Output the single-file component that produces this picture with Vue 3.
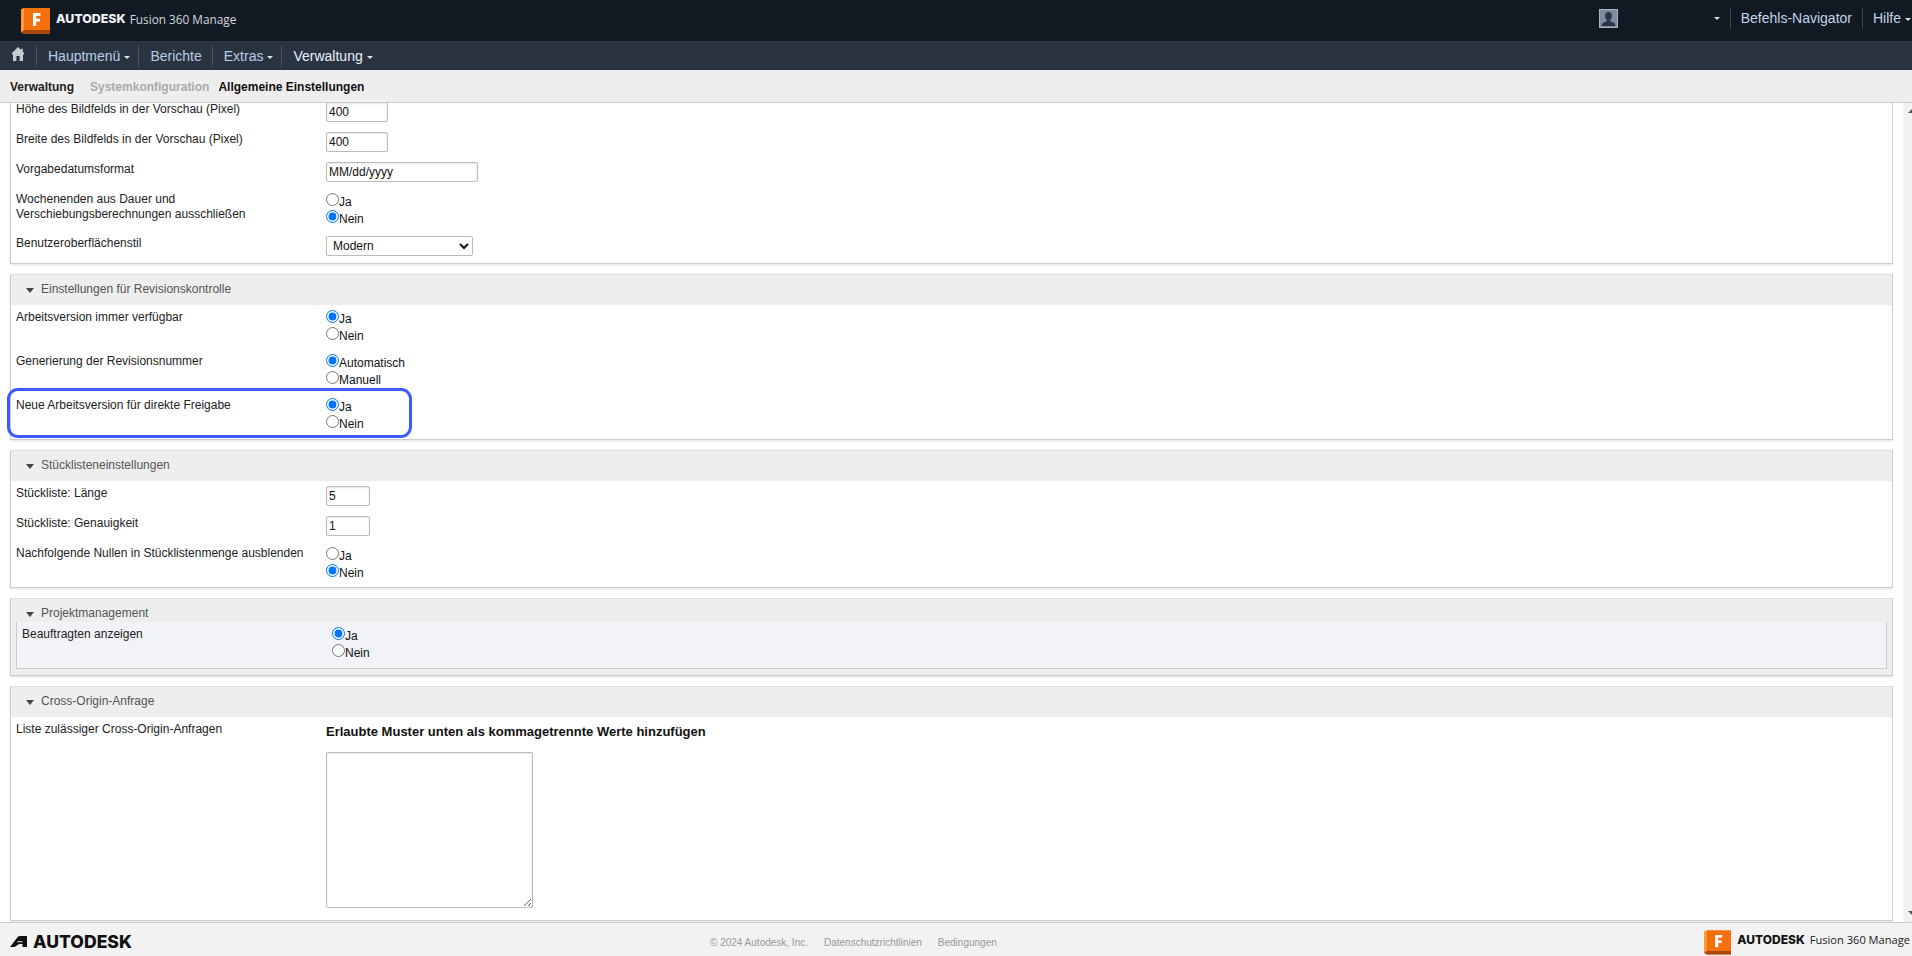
<script setup>
const navItems = [
  { label: 'Hauptmenü', caret: true },
  { label: 'Berichte' },
  { label: 'Extras', caret: true },
  { label: 'Verwaltung', caret: true, active: true },
];
</script>

<template>
  <div class="page">
    <header class="topbar">
      <div class="brand">
        <svg class="f-icon" viewBox="0 0 29 26" width="29" height="26">
          <polygon points="0,1.5 3,0 29,0 29,26 3,26 0,24" fill="#f7942f" />
          <rect x="3" y="0" width="26" height="22" fill="#f56f0c" />
          <polygon points="0,24 3,22 29,22 29,26 3,26" fill="#a8470c" />
          <polygon points="0,1.5 3,0 3,22 0,24" fill="#ff9c38" />
          <path d="M12 5h7.5v2.8h-4.2v3h3.7v2.7h-3.7V18H12z" fill="#fff" />
        </svg>
        <span class="brand-name">AUTODESK</span>
        <span class="brand-product">Fusion 360 Manage</span>
      </div>
      <div class="top-right">
        <svg class="avatar" viewBox="0 0 19 19" width="19" height="19">
          <rect width="19" height="19" fill="#7b8ba0" />
          <rect x="0.5" y="0.5" width="18" height="18" fill="none" stroke="#aab4c0" />
          <path d="M9.5 3c2.2 0 3.4 1.7 3.4 3.9 0 1.6-.7 3-1.6 3.8v1.6l3.7 1.7c.8.4 1.2.9 1.2 2V17H2.800v-1c0-1.100.4-1.600 1.200-2l3.700-1.700v-1.600c-.9-.8-1.600-2.200-1.600-3.800C6.100 4.700 7.300 3 9.500 3z" fill="#2b3644" />
        </svg>
        <i class="caret user-caret"></i>
        <span class="top-sep"></span>
        <a class="top-link">Befehls-Navigator</a>
        <span class="top-sep"></span>
        <a class="top-link">Hilfe<i class="caret"></i></a>
      </div>
    </header>

    <nav class="navbar">
      <svg class="home" viewBox="0 0 12 14" width="12" height="14">
        <path d="M6 0 9 3V1.800h1.800V4.800L12 6v1.500H11V14H7.600V9H4.400V14H1V7.500H0V6z" fill="#c6cbd0" />
      </svg>
      <template v-for="item in navItems" :key="item.label">
        <span class="nav-sep"></span>
        <a class="nav-item" :class="{ active: item.active, 'has-caret': item.caret }">
          {{ item.label }}<i v-if="item.caret" class="caret"></i>
        </a>
      </template>
    </nav>

    <div class="crumbs">
      <span>Verwaltung</span>
      <span class="muted">Systemkonfiguration</span>
      <span>Allgemeine Einstellungen</span>
    </div>

    <div class="body">
      <main class="content">
        <section class="panel first">
          <div class="row input-row">
            <label>Höhe des Bildfelds in der Vorschau (Pixel)</label>
            <div><input class="txt w62" value="400" /></div>
          </div>
          <div class="row input-row">
            <label>Breite des Bildfelds in der Vorschau (Pixel)</label>
            <div><input class="txt w62" value="400" /></div>
          </div>
          <div class="row input-row">
            <label>Vorgabedatumsformat</label>
            <div><input class="txt w152" value="MM/dd/yyyy" /></div>
          </div>
          <div class="row radio-row compact">
            <label>Wochenenden aus Dauer und<br />Verschiebungsberechnungen ausschließen</label>
            <div>
              <div class="radio"><input type="radio" name="weekend" /><span>Ja</span></div>
              <div class="radio"><input type="radio" name="weekend" checked /><span>Nein</span></div>
            </div>
          </div>
          <div class="row input-row tight">
            <label>Benutzeroberflächenstil</label>
            <div><select class="sel"><option>Modern</option></select></div>
          </div>
        </section>

        <section class="panel revision">
          <h3 class="panel-head"><i class="tri"></i>Einstellungen für Revisionskontrolle</h3>
          <div class="row radio-row">
            <label>Arbeitsversion immer verfügbar</label>
            <div>
              <div class="radio"><input type="radio" name="wv" checked /><span>Ja</span></div>
              <div class="radio"><input type="radio" name="wv" /><span>Nein</span></div>
            </div>
          </div>
          <div class="row radio-row">
            <label>Generierung der Revisionsnummer</label>
            <div>
              <div class="radio"><input type="radio" name="gen" checked /><span>Automatisch</span></div>
              <div class="radio"><input type="radio" name="gen" /><span>Manuell</span></div>
            </div>
          </div>
          <div class="row radio-row">
            <label>Neue Arbeitsversion für direkte Freigabe</label>
            <div>
              <div class="radio"><input type="radio" name="neu" checked /><span>Ja</span></div>
              <div class="radio"><input type="radio" name="neu" /><span>Nein</span></div>
            </div>
            <span class="highlight"></span>
          </div>
        </section>

        <section class="panel bom">
          <h3 class="panel-head"><i class="tri"></i>Stücklisteneinstellungen</h3>
          <div class="bom-rows">
            <div class="row input-row">
              <label>Stückliste: Länge</label>
              <div><input class="txt w44" value="5" /></div>
            </div>
            <div class="row input-row">
              <label>Stückliste: Genauigkeit</label>
              <div><input class="txt w44" value="1" /></div>
            </div>
            <div class="row radio-row compact">
              <label>Nachfolgende Nullen in Stücklistenmenge ausblenden</label>
              <div>
                <div class="radio"><input type="radio" name="null" /><span>Ja</span></div>
                <div class="radio"><input type="radio" name="null" checked /><span>Nein</span></div>
              </div>
            </div>
          </div>
        </section>

        <section class="panel project">
          <h3 class="panel-head small"><i class="tri"></i>Projektmanagement</h3>
          <div class="inner">
            <div class="row radio-row">
              <label>Beauftragten anzeigen</label>
              <div>
                <div class="radio"><input type="radio" name="bea" checked /><span>Ja</span></div>
                <div class="radio"><input type="radio" name="bea" /><span>Nein</span></div>
              </div>
            </div>
          </div>
        </section>

        <section class="panel last">
          <h3 class="panel-head"><i class="tri"></i>Cross-Origin-Anfrage</h3>
          <div class="row cors">
            <label>Liste zulässiger Cross-Origin-Anfragen</label>
            <div>
              <p class="hint">Erlaubte Muster unten als kommagetrennte Werte hinzufügen</p>
              <textarea class="area"></textarea>
            </div>
          </div>
        </section>
      </main>

      <aside class="scrollbar">
        <i class="arrow up"></i>
        <i class="arrow down"></i>
      </aside>
    </div>

    <footer class="footer">
      <div class="adsk">
        <svg viewBox="0 0 17 11" width="17" height="11">
          <path d="M0 11 7.500 1.200Q8.500 0 10 0H17V11H12.500V8H9.200L4.500 11z" fill="#111" />
          <path d="M7.800 5.200H12.500V6.200H7z" fill="#f2f2f2" />
        </svg>
        <span>AUTODESK</span>
      </div>
      <div class="legal">
        <span>© 2024 Autodesk, Inc.</span>
        <span>Datenschutzrichtlinien</span>
        <span>Bedingungen</span>
      </div>
      <div class="foot-brand">
        <svg viewBox="0 0 29 26" width="27" height="25">
          <polygon points="0,1.5 3,0 29,0 29,26 3,26 0,24" fill="#f7942f" />
          <rect x="3" y="0" width="26" height="22" fill="#f56f0c" />
          <polygon points="0,24 3,22 29,22 29,26 3,26" fill="#a8470c" />
          <polygon points="0,1.5 3,0 3,22 0,24" fill="#ff9c38" />
          <path d="M12 5h7.500v2.800h-4.200v3h3.700v2.700h-3.700V18H12z" fill="#fff" />
        </svg>
        <span class="foot-name">AUTODESK</span>
        <span class="foot-product">Fusion 360 Manage</span>
      </div>
    </footer>
  </div>
</template>

<style>
html, body {
  margin: 0;
  overflow: hidden;
}
</style>

<style scoped>
.page {
  width: 1912px;
  height: 956px;
  display: flex;
  flex-direction: column;
  overflow: hidden;
  font-family: "Liberation Sans", Arial, sans-serif;
  font-size: 12px;
  color: #222;
  background: #fff;
}

.caret {
  display: inline-block;
  width: 0;
  height: 0;
  margin-left: 4px;
  vertical-align: middle;
  border-left: 3px solid transparent;
  border-right: 3px solid transparent;
  border-top: 3px solid currentColor;
}

/* top bar */
.topbar {
  flex: 0 0 41px;
  display: flex;
  align-items: center;
  justify-content: space-between;
  background: #111a23;
  border-bottom: 1px solid #2f3842;
}
.brand {
  display: flex;
  align-items: center;
  margin-left: 21px;
}
.brand-name {
  margin: 0 0 4px 6px;
  font-family: Inter, sans-serif;
  font-weight: 800;
  font-size: 12.4px;
  color: #f2f4f6;
}
.brand-product {
  margin: 0 0 4px 4px;
  font-family: "Open Sans", sans-serif;
  font-size: 11.8px;
  font-weight: 500;
  color: #d4d8dc;
}
.top-right {
  display: flex;
  align-items: center;
  height: 100%;
  padding-bottom: 4px;
  box-sizing: border-box;
  color: #c2d4e8;
}
.avatar {
  margin-right: 96px;
}
.user-caret {
  color: #dde3ea;
  margin: 0 10px 0 0;
}
.top-sep {
  width: 1px;
  height: 21px;
  background: #3c454f;
}
.top-link {
  font-size: 14px;
  padding: 0 10px;
  margin-top: -1px;
  white-space: nowrap;
}
.top-link:last-child {
  padding-right: 1px;
}
.top-link .caret {
  color: #dde3ea;
}

/* nav */
.navbar {
  flex: 0 0 28px;
  display: flex;
  align-items: center;
  background: #2a3440;
}
.home {
  margin: -4px 12px 0 12px;
}
.nav-sep {
  width: 1px;
  height: 21px;
  background: #4b5560;
}
.nav-item {
  padding: 0 10px 0 11px;
  font-size: 14px;
  color: #b6cde6;
  white-space: nowrap;
}
.nav-item.has-caret {
  padding-right: 8px;
}
.nav-item.active {
  color: #e8f1fb;
}
.nav-item .caret {
  color: #dde3ea;
}

/* breadcrumbs */
.crumbs {
  flex: 0 0 33px;
  box-sizing: border-box;
  display: flex;
  align-items: center;
  gap: 16px;
  padding: 1px 10px 0;
  background: #eee;
  border-bottom: 1px solid #ccc;
  font-weight: bold;
  color: #222;
}
.crumbs .muted {
  color: #aaa;
}
.crumbs span:last-child {
  margin-left: -7px;
  color: #111;
}

/* scroll area */
.body {
  flex: 1 1 0;
  min-height: 0;
  display: flex;
}
.content {
  flex: 1 1 0;
  min-width: 0;
  overflow: hidden;
  padding-left: 10px;
}
.scrollbar {
  flex: 0 0 19px;
  position: relative;
  overflow: hidden;
  background: linear-gradient(to right, #fff 0, #fff 10px, #f1f1f1 10px);
}
.arrow {
  position: absolute;
  right: -4px;
  width: 0;
  height: 0;
  border-left: 4px solid transparent;
  border-right: 4px solid transparent;
}
.arrow.up {
  top: 6px;
  border-bottom: 4px solid #555;
}
.arrow.down {
  bottom: 7px;
  border-top: 4px solid #555;
}

/* panels */
.panel {
  border: 1px solid #ccc;
  border-top-color: #ddd;
  box-shadow: 0 1px 2px rgba(0, 0, 0, 0.12);
  margin-bottom: 10px;
  background: #fff;
}
.panel.first {
  margin-top: -3px;
  border-top: 0;
}
.revision {
  padding-bottom: 2px;
}
.bom-rows {
  padding-top: 3px;
}
.bom .compact {
  height: 43px;
}
.panel-head {
  margin: 0;
  height: 30px;
  box-sizing: border-box;
  padding-bottom: 3px;
  display: flex;
  align-items: center;
  background: #eee;
  font-size: 12px;
  font-weight: normal;
  color: #555;
}
.panel-head.small {
  height: 23px;
  padding: 4px 0 0;
}
.tri {
  width: 0;
  height: 0;
  margin: 3px 7px 0 15px;
  border-left: 4px solid transparent;
  border-right: 4px solid transparent;
  border-top: 5px solid #444;
}

.row {
  position: relative;
  display: flex;
  padding-left: 5px;
}
.row label {
  flex: 0 0 310px;
  line-height: 15px;
  padding-top: 1px;
  color: #222;
}
.input-row {
  height: 30px;
}
.input-row.tight {
  height: 29px;
}
.input-row label {
  padding-top: 2px;
}
.input-row > div {
  padding-top: 2px;
}
.radio-row {
  height: 44px;
  padding-top: 4px;
  box-sizing: border-box;
}
.radio-row.compact {
  padding-top: 2px;
}
.radio-row.compact label {
  padding-top: 0;
}
.radio {
  display: flex;
  height: 17px;
  line-height: 17px;
}
.radio input {
  width: 13px;
  height: 13px;
  margin: 1px 0 0;
  flex: none;
}
.radio span {
  padding-top: 2px;
  color: #111;
}

.txt {
  box-sizing: border-box;
  height: 20px;
  padding: 1px 2px;
  border: 1px solid #bbb;
  border-radius: 2px;
  box-shadow: inset 0 1px 2px rgba(0, 0, 0, 0.1);
  font-family: inherit;
  font-size: 12px;
  color: #111;
  outline: none;
}
.w62 { width: 62px; }
.w152 { width: 152px; }
.w44 { width: 44px; }
.sel {
  box-sizing: border-box;
  width: 147px;
  height: 20px;
  padding: 0 2px;
  border: 1px solid #bbb;
  border-radius: 2px;
  background: #fff;
  font-family: inherit;
  font-size: 12px;
  color: #111;
}

.highlight {
  position: absolute;
  left: -4px;
  top: -5px;
  box-sizing: border-box;
  width: 405px;
  height: 50px;
  border: 3px solid #3d5afe;
  border-radius: 11px;
  pointer-events: none;
}

.project {
  background: #eee;
  padding: 0 5px 6px;
}
.project .panel-head {
  margin: 0 -5px;
}
.inner {
  background: #f1f3f7;
  border: 1px solid #ccc;
  border-top: 0;
  height: 46px;
}

.last {
  margin-bottom: 0;
}
.cors {
  height: 203px;
  padding-top: 4px;
  box-sizing: border-box;
}
.hint {
  margin: 3px 0 0;
  font-size: 13px;
  font-weight: bold;
  line-height: 15px;
  color: #111;
}
.area {
  display: block;
  box-sizing: border-box;
  width: 207px;
  height: 156px;
  margin-top: 13px;
  border: 1px solid #bbb;
  border-radius: 2px;
  box-shadow: inset 0 1px 2px rgba(0, 0, 0, 0.1);
  outline: none;
}

/* footer */
.footer {
  flex: 0 0 34px;
  box-sizing: border-box;
  position: relative;
  display: flex;
  align-items: center;
  justify-content: space-between;
  background: #f2f2f2;
  border-top: 1px solid #ccc;
  padding: 0 2px 0 10px;
}
.adsk {
  display: flex;
  align-items: center;
  gap: 6px;
  margin-top: 4px;
  font-family: Inter, sans-serif;
  font-weight: 800;
  font-size: 17.6px;
  color: #111;
}
.legal {
  position: absolute;
  left: 710px;
  top: 14px;
  display: flex;
  gap: 16px;
  font-size: 10px;
  color: #999;
}
.foot-brand {
  display: flex;
  align-items: center;
  height: 100%;
}
.foot-brand svg {
  margin: 6px 6px 0 0;
}
.foot-name {
  font-family: Inter, sans-serif;
  font-weight: 800;
  font-size: 12px;
  color: #111;
}
.foot-product {
  margin-left: 5px;
  font-family: "Open Sans", sans-serif;
  font-size: 11.1px;
  font-weight: 500;
  color: #222;
}
</style>
